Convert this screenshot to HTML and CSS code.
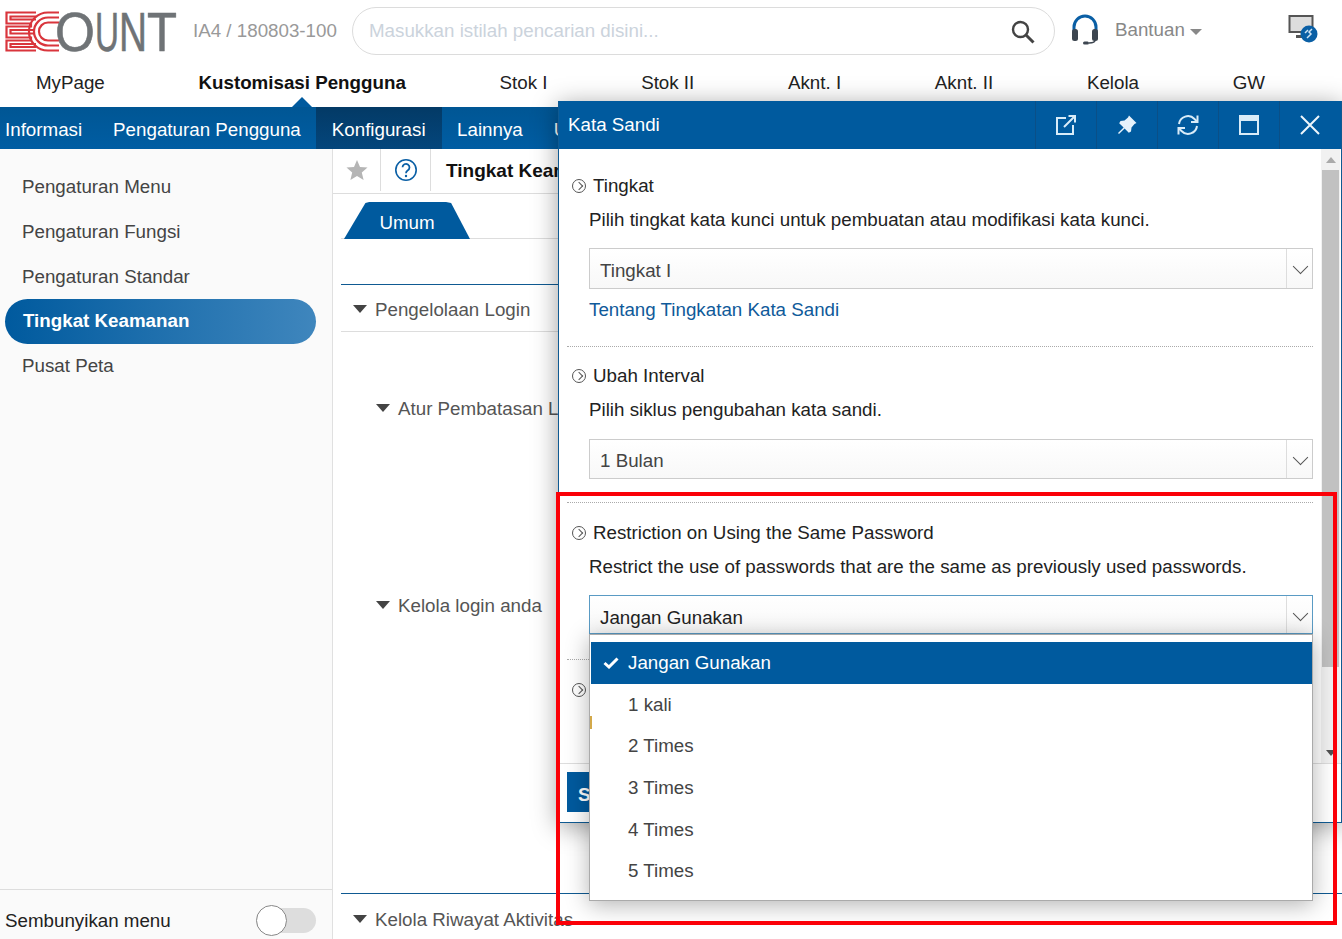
FILE: index.html
```html
<!DOCTYPE html>
<html lang="id">
<head>
<meta charset="utf-8">
<title>Kata Sandi</title>
<link rel="stylesheet" href="styles.css">
</head>
<body>
<div class="page">
  <header class="top">
    <svg class="logo" width="172" height="60" viewBox="0 -9 172 60">
      <g class="logo-mark">
        <path d="M31 1.5H1.5V12.5H26V15.5H1.5V26.5H26V29.5H1.5V39.5H31"/>
        <path d="M31 5.5H5.5V8.5H31M30 19H5.5V22.5H30M31 33H5.5V36H31"/>
        <path d="M54 1.5H43A19 19 0 0 0 43 39.5H54"/>
        <path d="M54 6.5H43A14 14 0 0 0 43 34.5H54"/>
        <path d="M54 11.5H43A9 9 0 0 0 43 29.5H54"/>
      </g>
      <text class="logo-text" x="50" y="39.5" textLength="40" lengthAdjust="spacingAndGlyphs">O</text>
      <text class="logo-text" x="90" y="39.5" textLength="24" lengthAdjust="spacingAndGlyphs">U</text>
      <text class="logo-text" x="114" y="39.5" textLength="28" lengthAdjust="spacingAndGlyphs">N</text>
      <text class="logo-text" x="142" y="39.5" textLength="30" lengthAdjust="spacingAndGlyphs">T</text>
    </svg>
    <span class="company">IA4 / 180803-100</span>
    <div class="search">
      <span class="search-ph">Masukkan istilah pencarian disini...</span>
      <svg width="26" height="26" viewBox="0 0 26 26"><circle cx="10.5" cy="10.5" r="7.5" fill="none" stroke="#444" stroke-width="2.4"/><path d="M16 16l7.5 7.5" stroke="#444" stroke-width="3"/></svg>
    </div>
    <svg class="headset" width="28" height="32" viewBox="0 0 28 32">
      <path d="M3 17V13A11 11 0 0 1 25 13V17" fill="none" stroke="#0a5fa5" stroke-width="3"/>
      <rect x="1" y="15" width="6" height="12" rx="2.5" fill="#3d4650"/>
      <rect x="21" y="15" width="6" height="12" rx="2.5" fill="#3d4650"/>
      <path d="M24 26Q24 29 18 29" fill="none" stroke="#3d4650" stroke-width="1.5"/>
      <rect x="12" y="27.5" width="6" height="3" rx="1.5" fill="#3d4650"/>
    </svg>
    <span class="help">Bantuan</span>
    <span class="help-caret"></span>
    <svg class="remote" width="30" height="30" viewBox="0 0 30 30">
      <rect x="1.5" y="2" width="23" height="16" fill="#ddd" stroke="#555" stroke-width="2"/>
      <rect x="8" y="21" width="12" height="3" fill="#555"/>
      <circle cx="21" cy="20" r="8.5" fill="#0a5fa5"/>
      <path d="M24 15l-3 3 2 2-4 4M20 16l-3 3" fill="none" stroke="#cfe3f3" stroke-width="1.5"/>
    </svg>
  </header>

  <nav class="mainnav">
    <a class="mainnav-item">MyPage</a>
    <a class="mainnav-item is-current">Kustomisasi Pengguna</a>
    <a class="mainnav-item">Stok I</a>
    <a class="mainnav-item">Stok II</a>
    <a class="mainnav-item">Aknt. I</a>
    <a class="mainnav-item">Aknt. II</a>
    <a class="mainnav-item">Kelola</a>
    <a class="mainnav-item">GW</a>
  </nav>

  <nav class="subnav">
    <a class="subnav-item">Informasi</a>
    <a class="subnav-item">Pengaturan Pengguna</a>
    <a class="subnav-item is-active">Konfigurasi</a>
    <a class="subnav-item">Lainnya</a>
    <a class="subnav-item">Umum</a>
  </nav>

  <div class="workspace">
    <aside class="sidebar">
      <ul class="side-list">
        <li class="side-item">Pengaturan Menu</li>
        <li class="side-item">Pengaturan Fungsi</li>
        <li class="side-item">Pengaturan Standar</li>
        <li class="side-item is-active">Tingkat Keamanan</li>
        <li class="side-item">Pusat Peta</li>
      </ul>
      <div class="side-foot">
        <span>Sembunyikan menu</span>
        <span class="toggle"><span class="knob"></span></span>
      </div>
    </aside>

    <main class="content">
      <div class="toolbar">
        <span class="tool-cell star-cell"><svg width="22" height="22" viewBox="0 0 22 22"><path d="M11 1l3 7 7.5.6-5.7 4.9 1.8 7.4L11 16.9l-6.6 4 1.8-7.4L.5 8.6 8 8z" fill="#b5b5b5"/></svg></span>
        <span class="tool-cell help-cell"><svg width="24" height="24" viewBox="0 0 24 24"><circle cx="12" cy="12" r="10.2" fill="none" stroke="#0a5fa5" stroke-width="1.6"/><path d="M8.5 9.2A3.5 3.5 0 1 1 13.6 12.5C12.5 13.2 12 13.8 12 15.3" fill="none" stroke="#0a5fa5" stroke-width="1.8"/><circle cx="12" cy="18" r="1.2" fill="#0a5fa5"/></svg></span>
        <span class="page-title">Tingkat Keamanan</span>
      </div>
      <div class="tabs"><span class="tab">Umum</span></div>
      <section class="group first-group">
        <div class="group-head"><span class="tri"></span>Pengelolaan Login</div>
        <div class="sub-row sub-a"><span class="tri"></span>Atur Pembatasan Login</div>
        <div class="sub-row sub-b"><span class="tri"></span>Kelola login anda</div>
      </section>
      <section class="group last-group">
        <div class="group-head no-line"><span class="tri"></span>Kelola Riwayat Aktivitas</div>
      </section>
    </main>
  </div>

  <div class="modal">
    <div class="modal-head">
      <span class="modal-title">Kata Sandi</span>
      <span class="modal-btn"><svg width="22" height="22" viewBox="0 0 22 22" fill="none" stroke="#d9ecf8" stroke-width="2"><path d="M11 4H2V20H18V11"/><path d="M9 13L20 2M13.5 2H20V8.5"/></svg></span>
      <span class="modal-btn"><svg width="22" height="22" viewBox="0 0 22 22"><path d="M13 1.5L20.5 9 18.5 10 15.5 13.5 15 17.5 12.8 18.8 8.6 14.4 3 20 2 19 7.6 13.4 3.2 9.2 4.5 7 8.5 6.5 12 3.5z" fill="#e6f2fb"/></svg></span>
      <span class="modal-btn"><svg width="22" height="22" viewBox="0 0 22 22" fill="none" stroke="#d9ecf8" stroke-width="2"><path d="M2 10A9 9 0 0 1 17.5 5L20 7.5"/><path d="M20.5 1.5V8H14" /><path d="M20 12A9 9 0 0 1 4.5 17L2 14.5"/><path d="M1.5 20.5V14H8"/></svg></span>
      <span class="modal-btn"><svg width="22" height="22" viewBox="0 0 22 22" fill="none" stroke="#d9ecf8"><rect x="2" y="2" width="18" height="18" stroke-width="2"/><path d="M2 5h18" stroke-width="4"/></svg></span>
      <span class="modal-btn"><svg width="22" height="22" viewBox="0 0 22 22" fill="none" stroke="#eef6fc" stroke-width="2"><path d="M2 2L20 20M20 2L2 20"/></svg></span>
    </div>
    <div class="modal-main">
      <div class="modal-body">
        <section class="setting">
          <h3 class="setting-title"><span class="bullet"></span>Tingkat</h3>
          <p class="setting-desc">Pilih tingkat kata kunci untuk pembuatan atau modifikasi kata kunci.</p>
          <div class="select h41"><span class="select-val">Tingkat I</span><span class="select-arrow"></span></div>
          <a class="link">Tentang Tingkatan Kata Sandi</a>
        </section>
        <section class="setting tight">
          <h3 class="setting-title"><span class="bullet"></span>Ubah Interval</h3>
          <p class="setting-desc">Pilih siklus pengubahan kata sandi.</p>
          <div class="select gap18"><span class="select-val">1 Bulan</span><span class="select-arrow"></span></div>
        </section>
        <section class="setting">
          <h3 class="setting-title"><span class="bullet"></span>Restriction on Using the Same Password</h3>
          <p class="setting-desc">Restrict the use of passwords that are the same as previously used passwords.</p>
          <div class="select is-open"><span class="select-val">Jangan Gunakan</span><span class="select-arrow"></span></div>
        </section>
        <section class="setting last">
          <h3 class="setting-title"><span class="bullet"></span></h3>
        </section>
      </div>
      <div class="scrollbar">
        <span class="scroll-up"></span>
        <span class="scroll-thumb"></span>
        <span class="scroll-down"></span>
      </div>
    </div>
    <div class="modal-foot"><button class="save">Simpan</button></div>
  </div>

  <ul class="dropdown">
    <li class="option is-selected"><svg class="check" width="16" height="12" viewBox="0 0 16 12"><path d="M1.5 6l4.5 4L14.5 1.5" fill="none" stroke="#fff" stroke-width="3"/></svg>Jangan Gunakan</li>
    <li class="option">1 kali</li>
    <li class="option">2 Times</li>
    <li class="option">3 Times</li>
    <li class="option">4 Times</li>
    <li class="option">5 Times</li>
    <li class="note-mark"></li>
  </ul>

  <div class="annotation"></div>
</div>
</body>
</html>
```

FILE: styles.css
```css
* { box-sizing: border-box; }
html, body { margin: 0; padding: 0; }
body { font-family: "Liberation Sans", Arial, sans-serif; font-size: 18.75px; color: #333; background: #fff; }
ul { list-style: none; margin: 0; padding: 0; }
h3, p { margin: 0; font-weight: normal; font-size: inherit; }

.page { position: relative; width: 1342px; height: 939px; overflow: hidden; display: flex; flex-direction: column; }

/* header */
.top { height: 60px; flex: none; display: flex; align-items: center; padding-left: 5px; }
.logo { flex: none; margin-top: 3px; }
.logo-mark { fill: none; stroke: #d9353c; stroke-width: 2.2; }
.logo-text { font-size: 55px; fill: #6f7376; stroke: #6f7376; stroke-width: .6; font-family: "Liberation Sans", Arial, sans-serif; }
.company { margin-left: 16px; padding-top: 2px; color: #999; width: 159px; white-space: nowrap; }
.search { width: 703px; height: 48px; border: 1px solid #dcdcdc; border-radius: 24px; display: flex; align-items: center; justify-content: space-between; padding: 0 18px 0 16px; margin-top: 1px; }
.search-ph { color: #cbd3dc; }
.search svg { margin-top: 2px; }
.headset { margin-left: 16px; flex: none; }
.help { margin-left: 16px; color: #888; }
.help-caret { margin-left: 5px; margin-top: 3px; width: 0; height: 0; border: 6px solid transparent; border-top-color: #888; border-bottom-width: 0; }
.remote { margin-left: 86px; flex: none; margin-top: -2px; }

/* main nav */
.mainnav { height: 47px; flex: none; display: flex; gap: 93.7px; padding: 11px 0 0 36px; }
.mainnav-item { position: relative; color: #222; height: 24px; line-height: 24px; white-space: nowrap; }
.mainnav-item.is-current { font-weight: bold; color: #111; }
.mainnav-item.is-current::after { content: ""; position: absolute; left: 50%; margin-left: -10px; top: 26px; border: 10px solid transparent; border-bottom-color: #005a9e; border-top-width: 0; }

/* sub nav */
.subnav { height: 42px; flex: none; display: flex; background: linear-gradient(#005694, #005da3); }
.subnav-item { color: #fff; line-height: 46px; padding: 0 15.5px; white-space: nowrap; }
.subnav-item:first-child { padding: 0 15.5px 0 5px; }
.subnav-item.is-active { padding: 0 16px 0 15.5px; background: linear-gradient(#033a66, #04467c); }

/* workspace */
.workspace { flex: 1; display: flex; min-height: 0; }
.sidebar { width: 333px; flex: none; background: #fafafa; border-right: 1px solid #e0e0e0; display: flex; flex-direction: column; justify-content: space-between; }
.side-list { padding: 15px 16px 0 5px; }
.side-item { height: 45px; line-height: 45px; padding-left: 17px; color: #444; }
.side-item:last-child { line-height: 43px; }
.side-item.is-active { line-height: 43px; padding-left: 18px; border-radius: 23px; color: #fff; font-weight: bold; background: linear-gradient(90deg, #005a9e, #3f86bd); }
.side-foot { height: 50px; border-top: 1px solid #ddd; display: flex; align-items: center; justify-content: space-between; padding: 13px 16px 0 5px; color: #222; }
.toggle { position: relative; width: 60px; height: 25px; margin-top: -1px; border-radius: 13px; background: #ddd; }
.knob { position: absolute; left: 0; top: -3px; width: 31px; height: 31px; border-radius: 50%; background: #fff; border: 1px solid #888; }

/* content */
.content { flex: 1; min-width: 0; padding-left: 8px; display: flex; flex-direction: column; }
.toolbar { height: 45px; margin-left: -8px; flex: none; display: flex; align-items: stretch; border-bottom: 1px solid #ddd; }
.tool-cell { display: flex; align-items: center; justify-content: center; border-right: 1px solid #ddd; margin-bottom: 2px; }
.star-cell { width: 48px; }
.help-cell { width: 50px; }
.page-title { padding-left: 15px; line-height: 44px; font-weight: bold; color: #111; font-size: 19px; white-space: nowrap; }
.tabs { height: 45px; flex: none; padding-top: 8px; border-bottom: 1px solid #ddd; display: flex; }
.tab { margin-left: 3px; width: 126px; height: 37px; line-height: 42px; text-align: center; color: #fff; background: #005a9e; clip-path: polygon(0 100%, 17% 3%, 20% 0, 81% 0, 85% 3%, 100% 100%); }
.group { border-top: 1px solid #0f5a92; flex: none; }
.first-group { margin-top: 45px; height: 609px; }
.group-head { height: 47px; border-bottom: 1px solid #ddd; display: flex; align-items: center; padding: 4px 0 0 12px; color: #555; white-space: nowrap; }
.group-head.no-line { border-bottom: 0; height: 50px; padding-top: 2px; }
.tri { width: 0; height: 0; border: 7px solid transparent; border-top: 8px solid #444; border-bottom: 0; margin-right: 8px; margin-top: -2px; }
.sub-row { display: flex; align-items: center; padding: 2px 0 0 35px; height: 24px; color: #555; white-space: nowrap; }
.sub-a { margin-top: 64px; }
.sub-b { margin-top: 173px; }

/* modal */
.modal { position: absolute; left: 558px; top: 101px; width: 784px; height: 722px; background: #fff; border: 1px solid #0f5a92; border-top: 0; box-shadow: 0 4px 24px rgba(0,0,0,.38); display: flex; flex-direction: column; }
.modal-head { height: 48px; flex: none; background: #005a9e; display: flex; align-items: center; padding-right: 1px; }
.modal-title { flex: 1; padding-left: 9px; color: #fff; }
.modal-btn { width: 61px; height: 48px; flex: none; display: flex; align-items: center; justify-content: center; border-left: 1px solid #0a4f87; }
.modal-main { flex: 1; min-height: 0; display: flex; padding-right: 1px; }
.modal-body { flex: 1; min-width: 0; overflow: hidden; padding: 24px 8px 0 8px; }
.setting { border-bottom: 1px dotted #aaa; padding-bottom: 25px; margin-bottom: 16px; }
.setting.tight { padding-bottom: 23px; margin-bottom: 17px; }
.setting.last { border-bottom: 0; padding-bottom: 0; margin-bottom: 0; padding-top: 1px; }
.setting-title { display: flex; align-items: center; height: 24px; padding: 2px 0 0 5px; color: #222; white-space: nowrap; }
.bullet { position: relative; width: 14px; height: 14px; border: 1px solid #555; border-radius: 50%; margin-right: 7px; margin-top: -1px; flex: none; }
.bullet::after { content: ""; position: absolute; left: 2.5px; top: 3.5px; width: 5px; height: 5px; border-top: 1px solid #555; border-right: 1px solid #555; transform: rotate(45deg); }
.setting-desc { height: 24px; line-height: 26px; margin-top: 10px; padding-left: 22px; color: #222; white-space: nowrap; }
.select { margin: 17px 0 0 22px; height: 40px; width: 724px; border: 1px solid #ccc; display: flex; background: linear-gradient(#fff, #f8f8f8); }
.select.h41 { height: 41px; }
.select.gap18 { margin-top: 18px; }
.select.is-open { height: 39px; border-color: #5a9bc4; }
.select-val { flex: 1; padding-left: 10px; line-height: 42px; color: #444; }
.h41 .select-val { line-height: 44px; }
.is-open .select-val { color: #222; line-height: 44px; }
.select-arrow { position: relative; width: 26px; border-left: 1px solid #ddd; flex: none; }
.select-arrow::after { content: ""; position: absolute; left: 7.5px; top: 12px; width: 10px; height: 10px; border-right: 1px solid #555; border-bottom: 1px solid #555; transform: rotate(45deg); }
.link { display: block; margin: 8px 0 0 22px; height: 24px; line-height: 26px; color: #0f5a9a; }
.scrollbar { width: 19px; flex: none; background: #f1f1f1; display: flex; flex-direction: column; align-items: center; }
.scroll-up { margin-top: 8px; border: 5px solid transparent; border-bottom: 6px solid #aaa; border-top: 0; }
.scroll-thumb { width: 17px; height: 497px; margin-top: 7px; background: #c1c1c1; }
.scroll-down { margin-top: 83px; border: 5px solid transparent; border-top: 6px solid #505050; border-bottom: 0; }
.modal-foot { height: 59px; flex: none; border-top: 1px solid #ddd; padding: 8px 0 0 8px; }
.save { width: 90px; height: 40px; border: 0; background: #005a9e; color: #fff; font: bold 18.75px "Liberation Sans", Arial, sans-serif; text-align: left; padding: 6px 0 0 11px; }

/* dropdown */
.dropdown { position: absolute; left: 589px; top: 634px; width: 724px; height: 267px; padding: 7px 0 0 1px; background: #fff; border: 1px solid #aaa; box-shadow: 0 4px 22px rgba(0,0,0,.3); }
.option { position: relative; height: 41.7px; line-height: 41.7px; padding-left: 37px; color: #444; }
.option.is-selected { color: #fff; background: #005a9e; }
.check { position: absolute; left: 12px; top: 15px; }
.note-mark { position: absolute; left: 0; top: 81px; width: 2px; height: 13px; background: #d3a94a; }

/* annotation */
.annotation { position: absolute; left: 556px; top: 492px; width: 781px; height: 433px; border: 4px solid #fb0007; }
```
